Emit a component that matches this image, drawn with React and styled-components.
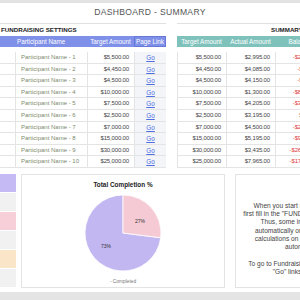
import React from "react";
import styled, { createGlobalStyle } from "styled-components";

const GlobalStyle = createGlobalStyle`
  html, body {
    margin: 0;
    padding: 0;
    background: #ffffff;
    overflow: hidden;
  }
  body {
    font-family: "Liberation Sans", Arial, sans-serif;
  }
`;

const Page = styled.div`
  width: 300px;
  height: 300px;
  overflow: hidden;
  display: flex;
  flex-direction: column;
`;

const TopBar = styled.div`
  height: 3px;
  background: #e2e2e2;
  flex-shrink: 0;
`;

const Title = styled.h1`
  margin: 0;
  height: 20px;
  line-height: 18px;
  text-align: center;
  font-size: 8.6px;
  font-weight: normal;
  letter-spacing: 0.3px;
  color: #555;
  flex-shrink: 0;
`;

const TablesRow = styled.div`
  display: flex;
  gap: 11px;
  width: 420px;
  flex-shrink: 0;
`;

const Block = styled.section`
  width: ${(p) => p.$width}px;
  flex-shrink: 0;
`;

const SectionLabel = styled.div`
  height: 13px;
  border-top: 1px solid #e0e0e0;
  box-sizing: border-box;
  padding-left: ${(p) => p.$indent || 1}px;
  line-height: 12px;
  font-size: 6.2px;
  font-weight: bold;
  color: #222;
  white-space: nowrap;
`;

const Grid = styled.div`
  display: grid;
  grid-template-columns: ${(p) => p.$cols};
`;

const HeadCell = styled.div`
  height: 11px;
  line-height: 11px;
  padding-left: ${(p) => (p.$align === "left" ? "2px" : "0")};
  background: ${(p) => p.$bg};
  color: #ffffff;
  font-size: 6.3px;
  text-align: ${(p) => p.$align || "center"};
  white-space: nowrap;
  overflow: hidden;
  box-shadow: ${(p) => (p.$boxed ? "inset 0 0 0 1px #6677d8" : "none")};
`;

const Body = styled.div`
  margin-top: 5px;
`;

const Cell = styled.div`
  height: 11.6px;
  line-height: 11.6px;
  box-sizing: border-box;
  border-bottom: 1px solid #e4e4e4;
  border-left: ${(p) => (p.$noLeft ? "none" : "1px solid #e4e4e4")};
  background: ${(p) => p.$bg || "transparent"};
  padding: 0 5px;
  font-size: 6px;
  letter-spacing: ${(p) => (p.$tight ? "-0.15px" : "0")};
  text-align: ${(p) => p.$align || "left"};
  color: ${(p) => p.$color || "#444"};
  white-space: nowrap;
  overflow: hidden;
`;

const GoLink = styled.a`
  color: #4d6fe0;
  text-decoration: underline;
  font-size: 6.4px;
`;

const BottomRow = styled.div`
  display: flex;
  gap: 5px;
  margin-top: 6px;
  height: 114px;
  width: 420px;
  flex-shrink: 0;
`;

const Swatches = styled.div`
  width: 16px;
  display: flex;
  flex-direction: column;
  flex-shrink: 0;
`;

const Swatch = styled.div`
  flex: 1;
  background: ${(p) => p.$color};
  border-bottom: 1px solid #ffffff;
`;

const Card = styled.div`
  width: ${(p) => p.$width}px;
  margin-left: ${(p) => p.$offset || 0}px;
  flex-shrink: 0;
  box-sizing: border-box;
  border: 1px solid #e3e3e3;
  background: #ffffff;
`;

const ChartCard = styled(Card)`
  display: flex;
  flex-direction: column;
  align-items: center;
  padding-top: 6px;
`;

const ChartTitle = styled.div`
  font-size: 6.4px;
  font-weight: bold;
  color: #222;
  line-height: 8px;
`;

const PieWrap = styled.svg`
  display: block;
  margin-top: 5px;
`;

const Legend = styled.div`
  margin-top: 6px;
  font-size: 4.8px;
  color: #777;
  line-height: 8px;
`;

const NoteCard = styled(Card)`
  padding-top: 27px;
  text-align: center;
`;

const Note = styled.p`
  margin: 0;
  font-size: 6.6px;
  line-height: 8.25px;
  color: #444;
  white-space: nowrap;
  & + & {
    margin-top: 8.5px;
  }
`;

const Footer = styled.div`
  margin-top: 4px;
  height: 10px;
  background: #e4e4e4;
  flex-shrink: 0;
`;

const rows = [
  [5500, 2995],
  [4450, 4085],
  [4500, 4150],
  [10000, 1300],
  [7500, 4205],
  [2500, 3195],
  [7000, 4500],
  [15000, 5195],
  [30000, 3435],
  [25000, 7965],
];

const money = (v) => {
  const s = "$" + Math.abs(v).toLocaleString("en-US", { minimumFractionDigits: 2 });
  return v < 0 ? "-" + s : s;
};

const PieChart = () => {
  const r = 38;
  const a = (0.27 * 360 - 90) * (Math.PI / 180);
  const ex = (r * Math.cos(a)).toFixed(2);
  const ey = (r * Math.sin(a)).toFixed(2);
  return (
    <PieWrap width="80" height="78" viewBox="-40 -39 80 78">
      <path
        d={`M0,0 L${ex},${ey} A${r},${r} 0 1 1 0,-${r} Z`}
        fill="#c3b7f2"
        stroke="#ffffff"
        strokeWidth="0.8"
      />
      <path
        d={`M0,0 L0,-${r} A${r},${r} 0 0 1 ${ex},${ey} Z`}
        fill="#f5cad4"
        stroke="#ffffff"
        strokeWidth="0.8"
      />
      <text x="17" y="-10" fontSize="5" fill="#333" textAnchor="middle" fontFamily="Liberation Sans, sans-serif">
        27%
      </text>
      <text x="-17" y="15" fontSize="5" fill="#333" textAnchor="middle" fontFamily="Liberation Sans, sans-serif">
        73%
      </text>
    </PieWrap>
  );
};

const App = () => {
  return (
    <Page>
      <GlobalStyle />
      <TopBar />
      <Title>DASHBOARD - SUMMARY</Title>
      <TablesRow>
        <Block $width={166}>
          <SectionLabel>FUNDRAISING SETTINGS</SectionLabel>
          <Grid $cols="15px 72px 47px 32px">
            <HeadCell $bg="#7f90e8" />
            <HeadCell $bg="#7f90e8" $align="left">Participant Name</HeadCell>
            <HeadCell $bg="#7f90e8">Target Amount</HeadCell>
            <HeadCell $bg="#7f90e8" $boxed>Page Link</HeadCell>
          </Grid>
          <Body>
            <Grid $cols="15px 72px 47px 32px">
              {rows.map(([target], i) => (
                <React.Fragment key={i}>
                  <Cell $noLeft />
                  <Cell $color="#7b8a6c">Participant Name - {i + 1}</Cell>
                  <Cell $align="right" $tight>{money(target)}</Cell>
                  <Cell $align="center" $bg="#f4f5f9">
                    <GoLink href="#">Go</GoLink>
                  </Cell>
                </React.Fragment>
              ))}
            </Grid>
          </Body>
        </Block>
        <Block $width={160}>
          <SectionLabel $indent={94}>SUMMARY</SectionLabel>
          <Grid $cols="49px 49px 50px">
            <HeadCell $bg="#7fc2bc">Target Amount</HeadCell>
            <HeadCell $bg="#7fc2bc">Actual Amount</HeadCell>
            <HeadCell $bg="#7fc2bc">Balance</HeadCell>
          </Grid>
          <Body>
            <Grid $cols="49px 49px 50px">
              {rows.map(([target, actual], i) => {
                const bal = actual - target;
                return (
                  <React.Fragment key={i}>
                    <Cell $align="right" $tight>{money(target)}</Cell>
                    <Cell $align="right" $tight>{money(actual)}</Cell>
                    <Cell $align="right" $tight $color={bal < 0 ? "#e0403c" : "#444"}>
                      {money(bal)}
                    </Cell>
                  </React.Fragment>
                );
              })}
            </Grid>
          </Body>
        </Block>
      </TablesRow>
      <BottomRow>
        <Swatches>
          <Swatch $color="#c5baf3" />
          <Swatch $color="#f1f1f1" />
          <Swatch $color="#f6cfd8" />
          <Swatch $color="#f1f1f1" />
          <Swatch $color="#fbe5c9" />
          <Swatch $color="#f1f1f1" />
        </Swatches>
        <ChartCard $width={204}>
          <ChartTitle>Total Completion %</ChartTitle>
          <PieChart />
          <Legend>- Completed</Legend>
        </ChartCard>
        <NoteCard $width={140} $offset={5}>
          <Note>
            When you start using this template,
            <br />
            first fill in the "FUNDRAISING SETTINGS"
            <br />
            Thus, some information will be
            <br />
            automatically or manually used for
            <br />
            calculations on the dashboard and
            <br />
            automatically.
          </Note>
          <Note>
            To go to Fundraising Page, click on the
            <br />
            "Go" links in the table.
          </Note>
        </NoteCard>
      </BottomRow>
      <Footer />
    </Page>
  );
};

export default App;
